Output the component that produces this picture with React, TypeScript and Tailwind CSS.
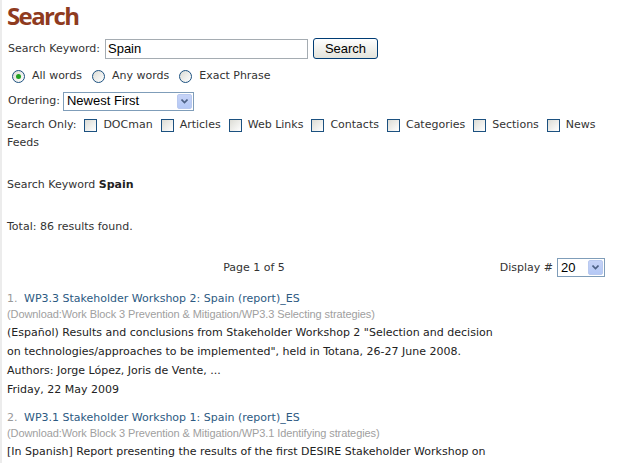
import React from "react";

const results = [
  {
    n: 1,
    title: "WP3.3 Stakeholder Workshop 2: Spain (report)_ES",
    path: "(Download:Work Block 3 Prevention & Mitigation/WP3.3 Selecting strategies)",
    desc: [
      '(Español) Results and conclusions from Stakeholder Workshop 2 "Selection and decision',
      'on technologies/approaches to be implemented", held in Totana, 26-27 June 2008.',
      "Authors: Jorge López, Joris de Vente, ...",
    ],
    date: "Friday, 22 May 2009",
  },
  {
    n: 2,
    title: "WP3.1 Stakeholder Workshop 1: Spain (report)_ES",
    path: "(Download:Work Block 3 Prevention & Mitigation/WP3.1 Identifying strategies)",
    desc: ["[In Spanish] Report presenting the results of the first DESIRE Stakeholder Workshop on"],
    date: "",
  },
];

function Radio({ checked }: { checked?: boolean }) {
  return (
    <span className="w-[13px] h-[13px] rounded-full border border-[#1c5180] bg-gradient-to-br from-[#dcdcd5] to-white flex items-center justify-center">
      {checked && <span className="w-[5px] h-[5px] rounded-full bg-[#21a121]" />}
    </span>
  );
}

function Check() {
  return <span className="w-[13px] h-[13px] border border-[#1c5180] bg-gradient-to-br from-[#dcdcd5] to-white" />;
}

function SelectBox({ value, width }: { value: string; width: string }) {
  return (
    <div className={`${width} h-[19px] border border-[#7f9db9] bg-white flex items-center justify-between pl-[3px] pr-[1px]`}>
      <span className="text-[13px] text-black font-['Liberation_Sans',sans-serif]">{value}</span>
      <span className="w-[15px] h-[15px] rounded-[2px] bg-gradient-to-b from-[#c6d3f7] to-[#b4c8f5] border border-[#b9c9ef] flex items-center justify-center">
        <svg width="7" height="5" viewBox="0 0 7 5">
          <path d="M0.5 0.5 L3.5 3.5 L6.5 0.5" stroke="#4d6185" strokeWidth="1.6" fill="none" />
        </svg>
      </span>
    </div>
  );
}

export default function App() {
  return (
    <div className="w-[619px] h-[463px] overflow-hidden bg-white border-l-2 border-[#ececec] pl-[5px] pr-[8px] text-[11px] leading-[18px] text-[#333] font-['DejaVu_Sans',sans-serif]">
      <h1 className="text-[24px] leading-[30px] font-bold text-[#8f3b1f] tracking-[-1.6px] pt-[1px] font-['Open_Sans',sans-serif]">
        Search
      </h1>

      <div className="flex items-center gap-[5px] mt-[7px] pl-[1px]">
        <span>Search Keyword:</span>
        <div className="w-[203px] h-[20px] border border-[#a5acb2] flex items-center px-[2px] text-[13px] text-black font-['Liberation_Sans',sans-serif]">
          Spain
        </div>
        <button className="w-[65px] h-[21px] rounded-[3px] border border-[#003c74] bg-gradient-to-b from-white to-[#e3e3db] text-[13px] text-black font-['Liberation_Sans',sans-serif]">
          Search
        </button>
      </div>

      <div className="flex items-center mt-[8px] pl-[5px] h-[18px]">
        <Radio checked />
        <span className="ml-[7px]">All words</span>
        <span className="ml-[10px]"><Radio /></span>
        <span className="ml-[7px]">Any words</span>
        <span className="ml-[10px]"><Radio /></span>
        <span className="ml-[7px]">Exact Phrase</span>
      </div>

      <div className="flex items-center mt-[6px] h-[20px]">
        <span className="pl-[1px]">Ordering:</span>
        <span className="ml-[3px]"><SelectBox value="Newest First" width="w-[131px]" /></span>
      </div>

      <div className="mt-[5px]">
        <div className="flex items-center h-[18px]">
          <span>Search Only:</span>
          {["DOCman", "Articles", "Web Links", "Contacts", "Categories", "Sections", "News"].map((l) => (
            <React.Fragment key={l}>
              <span className="ml-[8px] flex"><Check /></span>
              <span className="ml-[6px]">{l}</span>
            </React.Fragment>
          ))}
        </div>
        <div>Feeds</div>
      </div>

      <div className="mt-[24px]">
        Search Keyword <b className="text-[#222]">Spain</b>
      </div>

      <div className="mt-[24px]">Total: 86 results found.</div>

      <div className="relative mt-[22px] h-[20px] flex items-center justify-center">
        <span className="-ml-[110px]">Page 1 of 5</span>
        <div className="absolute right-[6px] top-0 flex items-center">
          <span className="mr-[4px]">Display #</span>
          <SelectBox value="20" width="w-[48px]" />
        </div>
      </div>

      <div className="mt-[13px]">
        {results.map((r) => (
          <div key={r.n} className="mb-[11px]">
            <div className="leading-[15px]">
              <span className="text-[#999]">{r.n}. </span>
              <a className="text-[#2c5a82] ml-[3px]">{r.title}</a>
            </div>
            <div className="text-[#a0a0a0] leading-[17px] text-[11px] font-['Liberation_Sans',sans-serif] tracking-[-0.1px]">
              {r.path}
            </div>
            {r.desc.map((d) => (
              <div key={d} className="leading-[19px] text-[#222]">{d}</div>
            ))}
            {r.date && <div className="leading-[19px] text-[#222]">{r.date}</div>}
          </div>
        ))}
      </div>
    </div>
  );
}
